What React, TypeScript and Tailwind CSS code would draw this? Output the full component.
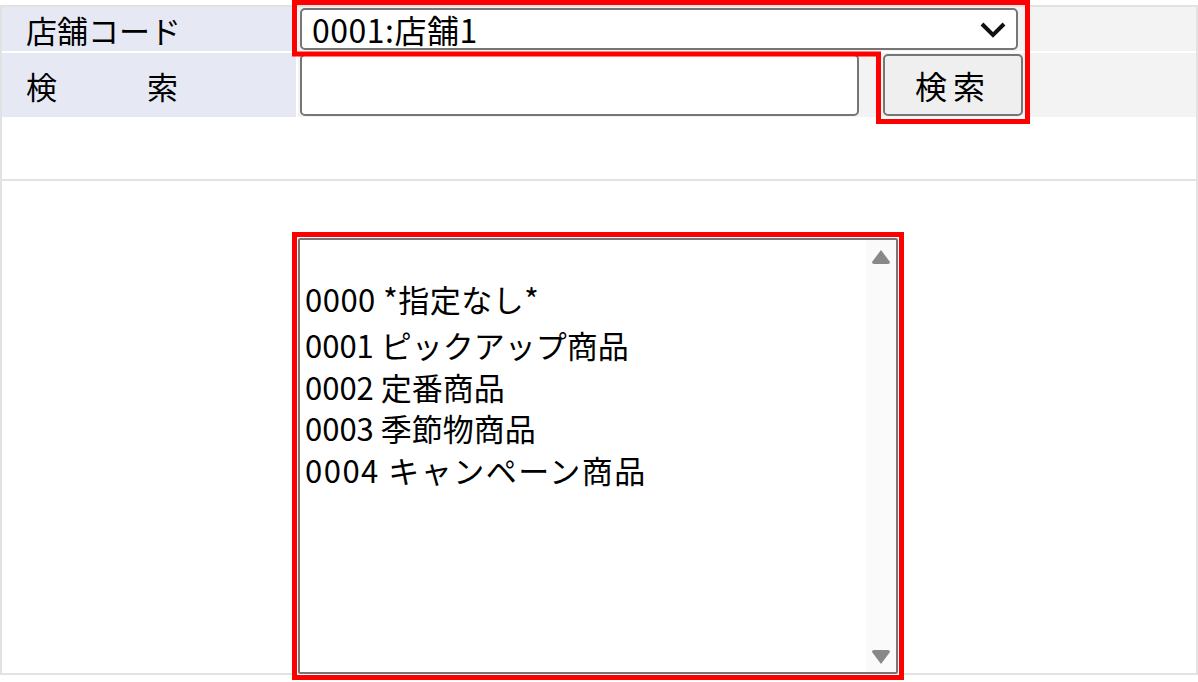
const ITEMS = [
  "0000 *指定なし*",
  "0001 ピックアップ商品",
  "0002 定番商品",
  "0003 季節物商品",
  "0004 キャンペーン商品",
];

function Arrow({ up }: { up?: boolean }) {
  return (
    <svg width="18" height="14" viewBox="0 0 18 14">
      {up ? (
        <path d="M9 0 L18 12 Q18 14 16 14 L2 14 Q0 14 0 12 Z" fill="#888888" />
      ) : (
        <path d="M9 14 L18 2 Q18 0 16 0 L2 0 Q0 0 0 2 Z" fill="#888888" />
      )}
    </svg>
  );
}

export default function App() {
  return (
    <div className="relative w-[1198px] h-[682px] overflow-hidden bg-white font-['Noto_Sans_CJK_JP','Noto_Sans',sans-serif] text-black">
      <div className="pt-[5px]">
        <div className="border-2 border-[#e2e2e2]">
          {/* Search form */}
          <div className="flex flex-col gap-[2px]">
            <div className="flex h-[44px] gap-[2px]">
              <div className="flex w-[294px] items-center bg-[#e6e9f4] pl-[24px] text-[31px] leading-none">店舗コード</div>
              <div className="flex flex-1 items-center bg-[#f3f3f3] pl-[2px]">
                <div className="flex h-[42px] w-[718px] items-center justify-between rounded-[5px] border-2 border-[#767676] bg-white pl-[10px] pr-[10px]">
                  <span className="text-[32px] leading-none tracking-[0.5px]">0001:店舗1</span>
                  <svg width="26" height="18" viewBox="0 0 26 18" className="mt-[1px]">
                    <polyline points="2,3 13,14 24,3" fill="none" stroke="#111111" strokeWidth="4" />
                  </svg>
                </div>
              </div>
            </div>
            <div className="flex h-[64px] gap-[2px]">
              <div className="flex w-[294px] items-center bg-[#e6e9f4] pl-[24px] text-[31px] leading-none">
                <div className="flex w-[152px] justify-between">
                  <span>検</span>
                  <span>索</span>
                </div>
              </div>
              <div className="flex flex-1 items-center gap-[24px] bg-[#f3f3f3] pl-[2px]">
                <input className="h-[62px] w-[559px] rounded-[5px] border-2 border-[#767676] bg-white px-2 text-[30px] outline-none" />
                <button className="h-[62px] w-[140px] rounded-[5px] border-2 border-[#767676] bg-[#efefef] text-[32px] leading-none tracking-[6px]">
                  検索
                </button>
              </div>
            </div>
          </div>

          <div className="h-[62px]" />

          {/* Category list */}
          <div className="h-[494px] border-t-2 border-[#e2e2e2]">
            <div className="ml-[290px] mt-[51px] h-[448px] w-[612px] border-[5px] border-[#ff0000] bg-white p-[1px]">
              <div className="flex h-full rounded-[2px] border-2 border-[#767676] bg-white">
                <div className="flex-1 pl-[5px] pt-[38px] text-[31px]">
                  {ITEMS.map((t, i) => (
                    <div key={t} className={`h-[41.5px] leading-[41.5px] whitespace-pre ${i === 0 ? "mb-[4.5px] tracking-[0.5px]" : ""} ${i === 4 ? "tracking-[1.5px]" : ""}`}>
                      {t}
                    </div>
                  ))}
                </div>
                <div className="flex w-[30px] flex-col items-center justify-between bg-[#fafafa] pt-[10px] pb-[8px]">
                  <Arrow up />
                  <Arrow />
                </div>
              </div>
            </div>
          </div>
        </div>
      </div>

      {/* highlight around store select + search button */}
      <svg className="pointer-events-none absolute left-0 top-0" width="1198" height="130">
        <path
          d="M294.5 2.5 H1027.5 V121.5 H878.5 V54 H294.5 Z"
          fill="none"
          stroke="#ff0000"
          strokeWidth="5"
        />
      </svg>
    </div>
  );
}
